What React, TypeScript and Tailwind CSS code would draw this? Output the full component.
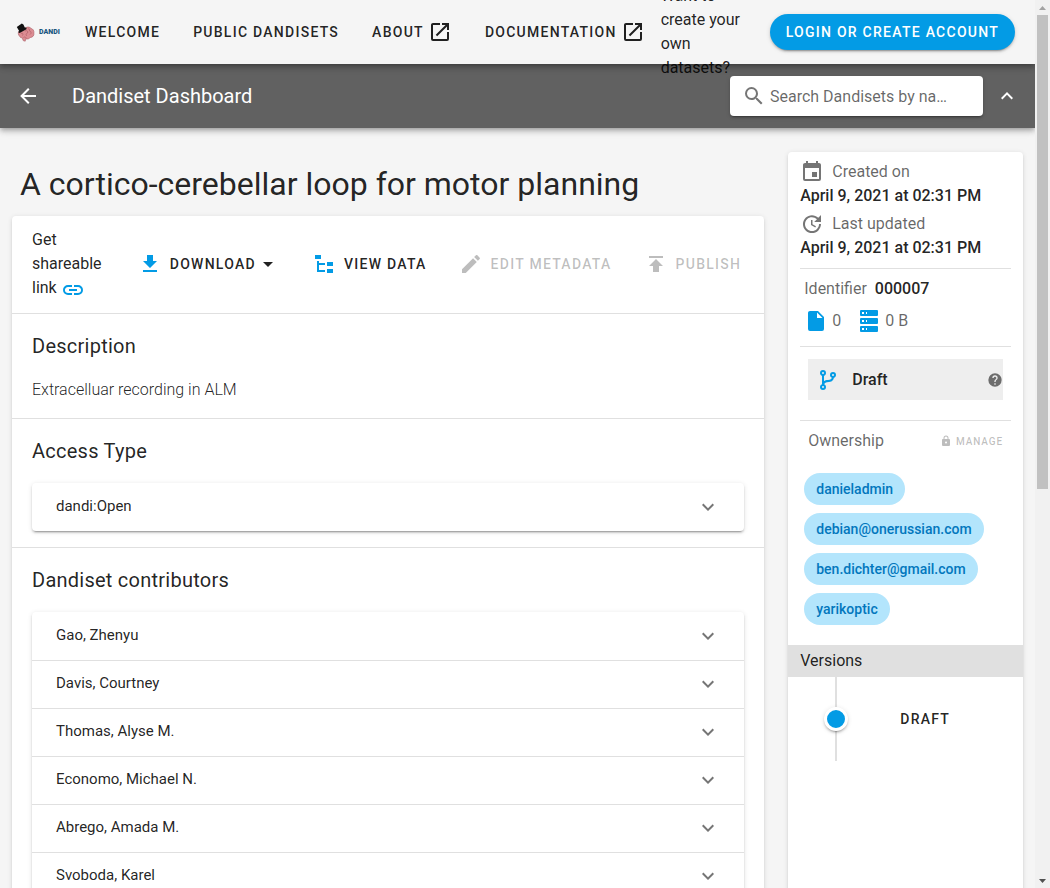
import React from "react";

const ICONS = {
  openInNew:
    "M14,3V5H17.59L7.76,14.83L9.17,16.24L19,6.41V10H21V3M19,19H5V5H12V3H5C3.89,3 3,3.9 3,5V19A2,2 0 0,0 5,21H19A2,2 0 0,0 21,19V12H19V19Z",
  arrowLeft: "M20,11V13H8L13.5,18.5L12.08,19.92L4.16,12L12.08,4.08L13.5,5.5L8,11H20Z",
  magnify:
    "M9.5,3A6.5,6.5 0 0,1 16,9.5C16,11.11 15.41,12.59 14.44,13.73L14.71,14H15.5L20.5,19L19,20.5L14,15.5V14.71L13.73,14.44C12.59,15.41 11.11,16 9.5,16A6.5,6.5 0 0,1 3,9.5A6.5,6.5 0 0,1 9.5,3M9.5,5C7,5 5,7 5,9.5C5,12 7,14 9.5,14C12,14 14,12 14,9.5C14,7 12,5 9.5,5Z",
  chevronUp: "M7.41,15.41L12,10.83L16.59,15.41L18,14L12,8L6,14L7.41,15.41Z",
  chevronDown: "M7.41,8.58L12,13.17L16.59,8.58L18,10L12,16L6,10L7.41,8.58Z",
  link: "M3.9,12C3.9,10.29 5.29,8.9 7,8.9H11V7H7A5,5 0 0,0 2,12A5,5 0 0,0 7,17H11V15.1H7C5.29,15.1 3.9,13.71 3.9,12M8,13H16V11H8V13M17,7H13V8.9H17C18.71,8.9 20.1,10.29 20.1,12C20.1,13.71 18.71,15.1 17,15.1H13V17H17A5,5 0 0,0 22,12A5,5 0 0,0 17,7Z",
  download: "M5,20H19V18H5M19,9H15V3H9V9H5L12,16L19,9Z",
  menuDown: "M7,10L12,15L17,10H7Z",
  fileTree: "M3,3H9V7H3V3M15,10H21V14H15V10M15,17H21V21H15V17M13,13H7V18H13V20H7L5,20V9H7V11H13V13Z",
  pencil:
    "M20.71,7.04C21.1,6.65 21.1,6 20.71,5.63L18.37,3.29C18,2.9 17.35,2.9 16.96,3.29L15.12,5.12L18.87,8.87M3,17.25V21H6.75L17.81,9.93L14.06,6.18L3,17.25Z",
  publish: "M5,4V6H19V4H5M5,14H9V20H15V14H19L12,7L5,14Z",
  calendar:
    "M19,19H5V8H19M16,1V3H8V1H6V3H5C3.89,3 3,3.89 3,5V19A2,2 0 0,0 5,21H19A2,2 0 0,0 21,19V5C21,3.89 20.1,3 19,3H18V1M17,12H12V17H17V12Z",
  update:
    "M21,10.12H14.22L16.96,7.3C14.23,4.6 9.81,4.5 7.08,7.2C4.35,9.91 4.35,14.28 7.08,17C9.81,19.7 14.23,19.7 16.96,17C18.32,15.65 19,14.08 19,12.1H21C21,14.08 20.12,16.65 18.36,18.39C14.85,21.87 9.15,21.87 5.64,18.39C2.14,14.92 2.11,9.28 5.62,5.81C9.13,2.34 14.76,2.34 18.27,5.81L21,3V10.12M12.5,8V12.25L16,14.33L15.28,15.54L11,13V8H12.5Z",
  file: "M13,9V3.5L18.5,9M6,2C4.89,2 4,2.89 4,4V20A2,2 0 0,0 6,22H18A2,2 0 0,0 20,20V8L14,2H6Z",
  server:
    "M4,1H20A1,1 0 0,1 21,2V6A1,1 0 0,1 20,7H4A1,1 0 0,1 3,6V2A1,1 0 0,1 4,1M4,9H20A1,1 0 0,1 21,10V14A1,1 0 0,1 20,15H4A1,1 0 0,1 3,14V10A1,1 0 0,1 4,9M4,17H20A1,1 0 0,1 21,18V22A1,1 0 0,1 20,23H4A1,1 0 0,1 3,22V18A1,1 0 0,1 4,17M9,5H10V3H9V5M9,13H10V11H9V13M9,21H10V19H9V21M5,3V5H7V3H5M5,11V13H7V11H5M5,19V21H7V19H5Z",
  branch:
    "M13,14C9.64,14 8.54,15.35 8.18,16.24C9.25,16.7 10,17.76 10,19A3,3 0 0,1 7,22A3,3 0 0,1 4,19C4,17.69 4.83,16.58 6,16.17V7.83C4.83,7.42 4,6.31 4,5A3,3 0 0,1 7,2A3,3 0 0,1 10,5C10,6.31 9.17,7.42 8,7.83V13.12C8.88,12.47 10.16,12 12,12C14.67,12 15.56,10.66 15.85,9.77C14.77,9.32 14,8.25 14,7A3,3 0 0,1 17,4A3,3 0 0,1 20,7C20,8.34 19.12,9.5 17.91,9.86C17.65,11.29 16.68,14 13,14M7,18A1,1 0 0,0 6,19A1,1 0 0,0 7,20A1,1 0 0,0 8,19A1,1 0 0,0 7,18M7,4A1,1 0 0,0 6,5A1,1 0 0,0 7,6A1,1 0 0,0 8,5A1,1 0 0,0 7,4M17,6A1,1 0 0,0 16,7A1,1 0 0,0 17,8A1,1 0 0,0 18,7A1,1 0 0,0 17,6Z",
  help: "M15.07,11.25L14.17,12.17C13.45,12.89 13,13.5 13,15H11V14.5C11,13.39 11.45,12.39 12.17,11.67L13.41,10.41C13.78,10.05 14,9.55 14,9C14,7.89 13.1,7 12,7A2,2 0 0,0 10,9H8A4,4 0 0,1 12,5A4,4 0 0,1 16,9C16,9.88 15.64,10.67 15.07,11.25M13,19H11V17H13M12,2A10,10 0 0,0 2,12A10,10 0 0,0 12,22A10,10 0 0,0 22,12C22,6.47 17.5,2 12,2Z",
  lock: "M12,17A2,2 0 0,0 14,15C14,13.89 13.1,13 12,13A2,2 0 0,0 10,15A2,2 0 0,0 12,17M18,8A2,2 0 0,1 20,10V20A2,2 0 0,1 18,22H6A2,2 0 0,1 4,20V10C4,8.89 4.9,8 6,8H7V6A5,5 0 0,1 12,1A5,5 0 0,1 17,6V8H18M12,3A3,3 0 0,0 9,6V8H15V6A3,3 0 0,0 12,3Z",
};

function Icon({ name, className = "size-6" }: { name: keyof typeof ICONS; className?: string }) {
  return (
    <svg viewBox="0 0 24 24" fill="currentColor" aria-hidden="true" className={`shrink-0 ${className}`}>
      <path d={ICONS[name]} />
    </svg>
  );
}

const buttonText = "text-sm font-medium uppercase tracking-[0.09em] whitespace-nowrap";
const cardShadow =
  "shadow-[0_3px_1px_-2px_rgba(0,0,0,0.06),0_2px_2px_0_rgba(0,0,0,0.08),0_1px_5px_0_rgba(0,0,0,0.12)]";
const barShadow =
  "shadow-[0_2px_4px_-1px_rgba(0,0,0,0.2),0_4px_5px_0_rgba(0,0,0,0.14),0_1px_10px_0_rgba(0,0,0,0.12)]";
const panelShadow =
  "shadow-[0_3px_1px_-2px_rgba(0,0,0,0.2),0_2px_2px_0_rgba(0,0,0,0.14),0_1px_5px_0_rgba(0,0,0,0.12)]";

const contributors = [
  "Gao, Zhenyu",
  "Davis, Courtney",
  "Thomas, Alyse M.",
  "Economo, Michael N.",
  "Abrego, Amada M.",
  "Svoboda, Karel",
];
const owners = ["danieladmin", "debian@onerussian.com", "ben.dichter@gmail.com", "yarikoptic"];

function Logo() {
  return (
    <a href="#home" aria-label="DANDI home" className="flex w-11 shrink-0 items-center gap-1">
      <svg viewBox="0 0 19 19" className="size-[19px] shrink-0" aria-hidden="true">
        <path
          d="M3 8C2 9.500 2 12 3.600 13.200C4 14.400 5.300 15 6.200 14.700L7.200 17.600L9.200 18.200L9.800 15.800C11.500 16.400 13.400 15.800 14.200 14.500C16.800 14.400 18.300 12.400 17.900 10.200C18.200 7.600 17 5.800 15 5.400C13.800 3.900 11.800 3.700 10.200 4.500L4 7.500Z"
          fill="#dc8c92"
          stroke="#a95c64"
          strokeWidth="0.6"
        />
        <path
          d="M5 10.500C6.500 9.500 7.500 11 6.500 12.500M9 8C11 7 12.500 8.500 11.500 10C10 10.500 9.500 12 11 13M12 6C13 5.500 14 6.500 13.500 8C15.500 8.500 15.500 10.500 14 11.500M7.500 14.500C9 13.500 10 14 10 15.500"
          fill="none"
          stroke="#b5636c"
          strokeWidth="0.8"
        />
        <path d="M0.800 4L5.800 0.500L7.400 1.600L8.800 4.600L10.600 4.800L10.400 6.200L3.600 10L2.400 9.400L3 7.800Z" fill="#111" />
      </svg>
      <span className="text-[7px] leading-none font-black text-[#1b5580]">DANDI</span>
    </a>
  );
}

function NavLink({ label, external = false }: { label: string; external?: boolean }) {
  return (
    <a href="#nav" className={`flex h-9 shrink-0 items-center gap-1 px-4 ${buttonText}`}>
      {label}
      {external && <Icon name="openInNew" />}
    </a>
  );
}

function Panels({ items }: { items: string[] }) {
  return (
    <div className={`rounded bg-white ${panelShadow}`}>
      {items.map((item, i) => (
        <button
          key={item}
          type="button"
          className={`flex h-12 w-full items-center justify-between border-t px-6 pb-0.5 text-left text-[15px] leading-none ${
            i === 0 ? "border-transparent" : "border-black/12"
          }`}
        >
          <span>{item}</span>
          <Icon name="chevronDown" className="size-6 text-black/54" />
        </button>
      ))}
    </div>
  );
}

function Section({ title, children }: { title: string; children: React.ReactNode }) {
  return (
    <section className="border-b border-black/12 px-5 py-4 last:border-b-0">
      <h2 className="mb-4 text-xl leading-8 tracking-[0.0125em]">{title}</h2>
      {children}
    </section>
  );
}

function ToolbarButton({
  icon,
  label,
  disabled = false,
  menu = false,
}: {
  icon: keyof typeof ICONS;
  label: string;
  disabled?: boolean;
  menu?: boolean;
}) {
  return (
    <button
      type="button"
      disabled={disabled}
      className={`flex h-9 shrink-0 items-center px-4 ${buttonText} ${disabled ? "text-black/26" : ""}`}
    >
      <Icon name={icon} className={disabled ? "mr-2 size-6" : "mr-2 size-6 text-[#039be5]"} />
      {label}
      {menu && <Icon name="menuDown" />}
    </button>
  );
}

function Timestamp({ icon, label, value }: { icon: keyof typeof ICONS; label: string; value: string }) {
  return (
    <div>
      <div className="flex h-6 items-center gap-2 text-black/60">
        <Icon name={icon} className="size-6 text-black/54" />
        {label}
      </div>
      <div className="font-medium whitespace-nowrap">{value}</div>
    </div>
  );
}

function Scrollbar() {
  return (
    <div aria-hidden="true" className="flex w-[15px] shrink-0 flex-col items-center bg-[#f1f1f1]">
      <svg viewBox="0 0 15 15" className="size-[15px] shrink-0">
        <path d="M4 10L7.500 6L11 10Z" fill="#a3a3a3" />
      </svg>
      <div className="flex w-[11px] flex-1 flex-col">
        <div className="h-[474px] bg-[#c1c1c1]" />
      </div>
      <svg viewBox="0 0 15 15" className="size-[15px] shrink-0">
        <path d="M4 6L7.500 10L11 6Z" fill="#505050" />
      </svg>
    </div>
  );
}

export default function App() {
  return (
    <div className="flex h-screen bg-[#f5f5f5] font-[Roboto,sans-serif] text-base text-black/87">
      <div className="min-w-0 flex-1 overflow-x-hidden overflow-y-auto [scrollbar-width:none]">
        <header className={`relative z-20 flex h-16 items-center bg-[#f5f5f5] pr-5 pl-4 ${barShadow}`}>
          <Logo />
          <nav className="ml-[9px] flex shrink-0 items-center gap-px">
            <NavLink label="Welcome" />
            <NavLink label="Public Dandisets" />
            <NavLink label="About" external />
            <NavLink label="Documentation" external />
          </nav>
          <span className="w-24 shrink-0">Want to create your own datasets?</span>
          <button
            type="button"
            className={`ml-auto h-9 shrink-0 rounded-full bg-[#039be5] px-4 text-white ${buttonText} ${panelShadow}`}
          >
            Login or create account
          </button>
        </header>

        <div className={`relative z-10 flex h-16 items-center bg-[#616161] px-4 text-white ${barShadow}`}>
          <button type="button" aria-label="Back">
            <Icon name="arrowLeft" />
          </button>
          <span className="ml-8 text-xl leading-8">Dandiset Dashboard</span>
          <label
            className={`ml-auto flex h-10 w-[253px] items-center gap-1 rounded bg-white px-3 ${panelShadow}`}
          >
            <Icon name="magnify" className="size-6 text-black/54" />
            <input
              type="text"
              aria-label="Search Dandisets"
              placeholder="Search Dandisets by name, description, identifier, or contributor name"
              className="h-10 w-45 min-w-0 overflow-hidden pt-px text-ellipsis text-black/87 outline-none placeholder:text-black/60"
            />
          </label>
          <button type="button" aria-label="Collapse search" className="ml-3">
            <Icon name="chevronUp" />
          </button>
        </div>

        <main className="grid grid-cols-4 py-3">
          <div className="col-span-3 p-3">
            <h1 className="pl-2 text-[32px] leading-[64px] whitespace-nowrap">
              A cortico-cerebellar loop for motor planning
            </h1>
            <div className={`rounded bg-white ${cardShadow}`}>
              <div className="flex min-h-[98px] items-center border-b border-black/12 pb-0.5 pl-5">
                <div className="min-w-0 flex-1">
                  Get shareable link{" "}
                  <button type="button" aria-label="Copy link" className="inline-block h-5 align-middle text-[#039be5]">
                    <Icon name="link" />
                  </button>
                </div>
                <div className="flex shrink-0 items-center pr-[7px]">
                  <ToolbarButton icon="download" label="Download" menu />
                  <ToolbarButton icon="fileTree" label="View Data" />
                  <ToolbarButton icon="pencil" label="Edit metadata" disabled />
                  <ToolbarButton icon="publish" label="Publish" disabled />
                </div>
              </div>
              <Section title="Description">
                <p className="font-light">Extracelluar recording in ALM</p>
              </Section>
              <Section title="Access Type">
                <Panels items={["dandi:Open"]} />
              </Section>
              <Section title="Dandiset contributors">
                <Panels items={contributors} />
              </Section>
            </div>
          </div>

          <aside className="p-3">
            <div className={`h-full rounded bg-white ${cardShadow}`}>
              <div className="px-3 pt-2">
                <div className="flex flex-col gap-1 border-b border-black/12 pb-2">
                  <Timestamp icon="calendar" label="Created on" value="April 9, 2021 at 02:31 PM" />
                  <Timestamp icon="update" label="Last updated" value="April 9, 2021 at 02:31 PM" />
                </div>
                <div className="border-b border-black/12 px-1 pt-2 pb-[13px] text-black/60">
                  <div className="leading-6">
                    Identifier <span className="ml-1 font-medium text-black/87">000007</span>
                  </div>
                  <div className="mt-2 flex h-6 items-center gap-1">
                    <Icon name="file" className="size-6 text-[#039be5]" />
                    <span className="mr-3">0</span>
                    <Icon name="server" className="size-6 text-[#039be5]" />
                    <span>0 B</span>
                  </div>
                </div>
                <div className="border-b border-black/12 px-2 pt-3 pb-5">
                  <div className="flex h-[41px] items-center bg-[#eee] pl-2">
                    <Icon name="branch" className="size-6 text-[#039be5]" />
                    <span className="ml-3 font-medium">Draft</span>
                    <Icon name="help" className="ml-auto size-4 text-black/54" />
                  </div>
                </div>
                <div className="flex items-center justify-between px-2 pt-2">
                  <span className="text-black/60">Ownership</span>
                  <button
                    type="button"
                    disabled
                    className="flex items-center gap-1 text-[10px] font-medium tracking-[0.09em] text-black/26 uppercase"
                  >
                    <Icon name="lock" className="size-3" />
                    Manage
                  </button>
                </div>
                <ul className="flex flex-col items-start gap-2 px-1 pt-5 pb-5">
                  {owners.map((owner) => (
                    <li
                      key={owner}
                      className="h-8 rounded-full bg-[#b3e5fc] px-3 text-sm leading-8 font-medium whitespace-nowrap text-[#0277bd]"
                    >
                      {owner}
                    </li>
                  ))}
                </ul>
              </div>
              <h3 className="bg-[#e0e0e0] px-3 py-1">Versions</h3>
              <div className="flex h-[84px] items-center">
                <div className="flex h-full w-24 flex-col items-center">
                  <div className="w-0.5 flex-1 bg-black/12" />
                  <div className={`size-6 rounded-full border-3 border-white bg-[#039be5] ${panelShadow}`} />
                  <div className="w-0.5 flex-1 bg-black/12" />
                </div>
                <button type="button" className={`h-9 px-4 ${buttonText}`}>
                  Draft
                </button>
              </div>
            </div>
          </aside>
        </main>
      </div>
      <Scrollbar />
    </div>
  );
}
